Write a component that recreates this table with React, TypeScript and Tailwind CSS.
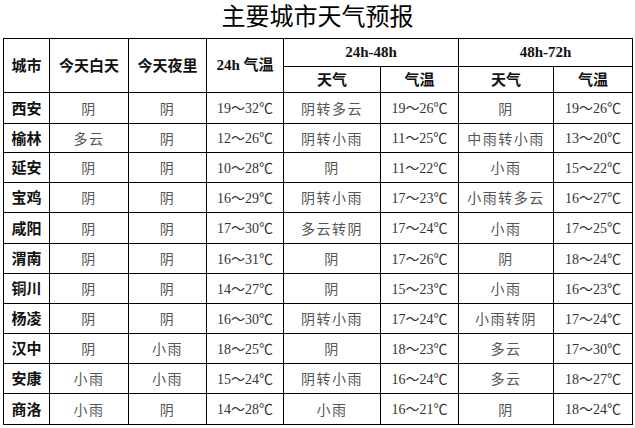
const rows = [
  ['西安', '阴', '阴', '19～32℃', '阴转多云', '19～26℃', '阴', '19～26℃'],
  ['榆林', '多云', '阴', '12～26℃', '阴转小雨', '11～25℃', '中雨转小雨', '13～20℃'],
  ['延安', '阴', '阴', '10～28℃', '阴', '11～22℃', '小雨', '15～22℃'],
  ['宝鸡', '阴', '阴', '16～29℃', '阴转小雨', '17～23℃', '小雨转多云', '16～27℃'],
  ['咸阳', '阴', '阴', '17～30℃', '多云转阴', '17～24℃', '小雨', '17～25℃'],
  ['渭南', '阴', '阴', '16～31℃', '阴', '17～26℃', '阴', '18～24℃'],
  ['铜川', '阴', '阴', '14～27℃', '阴', '15～23℃', '小雨', '16～23℃'],
  ['杨凌', '阴', '阴', '16～30℃', '阴转小雨', '17～24℃', '小雨转阴', '17～24℃'],
  ['汉中', '阴', '小雨', '18～25℃', '阴', '18～23℃', '多云', '17～30℃'],
  ['安康', '小雨', '小雨', '15～24℃', '阴转小雨', '16～24℃', '多云', '18～27℃'],
  ['商洛', '小雨', '阴', '14～28℃', '小雨', '16～21℃', '阴', '18～24℃'],
]

// row heights read off the reference gridlines
const rowH = ['h-[31px]', 'h-[29px]', 'h-[30px]', 'h-[30px]', 'h-[31px]', 'h-[30px]', 'h-[30px]', 'h-[30px]', 'h-[30px]', 'h-[30px]', 'h-[31px]']

const serif = "font-['Liberation_Serif','Noto_Sans_CJK_SC',serif]"
const cjk = "font-['Noto_Sans_CJK_SC',sans-serif]"

function Temp({ text }: { text: string }) {
  const [lo, hi] = text.replace('℃', '').split('～')
  return (
    <>
      {lo}
      <span className={cjk}>～</span>
      {hi}
      <span className={cjk}>℃</span>
    </>
  )
}

function Cell({ text, col }: { text: string; col: number }) {
  if (col === 0) {
    return (
      <td className={`border border-black text-center text-[15px] font-bold text-[#111] ${cjk}`}>{text}</td>
    )
  }
  const isTemp = col === 3 || col === 5 || col === 7
  if (isTemp) {
    return (
      <td className={`border border-black text-center text-[14px] text-[#333] ${serif}`}>
        <Temp text={text} />
      </td>
    )
  }
  return (
    <td className={`border border-black text-center text-[14px] tracking-[1.5px] text-[#555] ${cjk}`}>{text}</td>
  )
}

export default function App() {
  return (
    <div className="w-[635px] h-[428px] bg-white overflow-hidden">
      <div className={`h-[38px] ml-[3px] w-[629px] text-center text-[24px] leading-[29px] text-black ${cjk}`}>
        主要城市天气预报
      </div>
      <table className="ml-[3px] w-[629px] table-fixed border-collapse border border-black">
        <colgroup>
          <col className="w-[46px]" />
          <col className="w-[79px]" />
          <col className="w-[78px]" />
          <col className="w-[77px]" />
          <col className="w-[97px]" />
          <col className="w-[78px]" />
          <col className="w-[95px]" />
          <col className="w-[79px]" />
        </colgroup>
        <thead>
          <tr className="h-[28px]">
            <th rowSpan={2} className={`border border-black text-[15px] font-bold text-[#111] ${cjk}`}>城市</th>
            <th rowSpan={2} className={`border border-black text-[15px] font-bold text-[#111] ${cjk}`}>今天白天</th>
            <th rowSpan={2} className={`border border-black text-[15px] font-bold text-[#111] ${cjk}`}>今天夜里</th>
            <th rowSpan={2} className={`border border-black text-[15px] font-bold text-[#111] ${serif}`}>24h 气温</th>
            <th colSpan={2} className={`border border-black text-[15px] font-bold text-[#111] ${serif}`}>24h-48h</th>
            <th colSpan={2} className={`border border-black text-[15px] font-bold text-[#111] ${serif}`}>48h-72h</th>
          </tr>
          <tr className="h-[26px]">
            <th className={`border border-black text-[15px] font-bold text-[#111] ${cjk}`}>天气</th>
            <th className={`border border-black text-[15px] font-bold text-[#111] ${cjk}`}>气温</th>
            <th className={`border border-black text-[15px] font-bold text-[#111] ${cjk}`}>天气</th>
            <th className={`border border-black text-[15px] font-bold text-[#111] ${cjk}`}>气温</th>
          </tr>
        </thead>
        <tbody>
          {rows.map((r, i) => (
            <tr key={r[0]} className={rowH[i]}>
              {r.map((t, j) => (
                <Cell key={j} text={t} col={j} />
              ))}
            </tr>
          ))}
        </tbody>
      </table>
    </div>
  )
}
